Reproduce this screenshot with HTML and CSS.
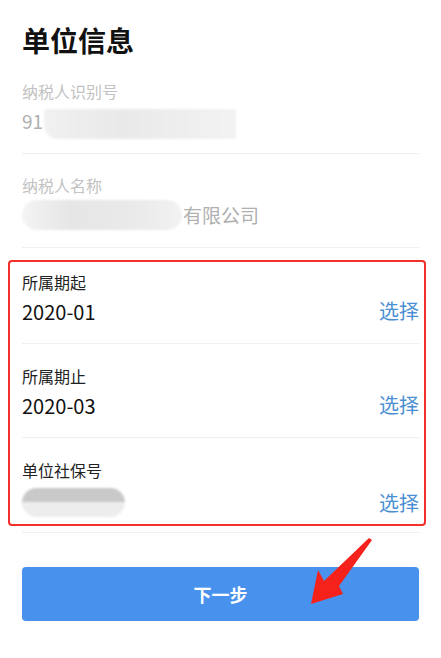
FILE: index.html
```html
<!DOCTYPE html>
<html lang="zh-CN">
<head>
    <meta charset="UTF-8">
    <meta name="viewport" content="width=device-width, initial-scale=1.0">
    <title>单位信息</title>
    <link rel="stylesheet" href="styles.css">
</head>
<body>
    <div class="page">
        <h1 class="title">单位信息</h1>

        <div class="field">
            <div class="field-label">纳税人识别号</div>
            <div class="field-value">91<span class="mask mask-id"></span></div>
        </div>

        <div class="field">
            <div class="field-label">纳税人名称</div>
            <div class="field-value"><span class="mask mask-name"></span>有限公司</div>
        </div>

        <div class="picker-box">
            <div class="picker-row picker-first">
                <div class="picker-label">所属期起</div>
                <div class="picker-line">
                    <span class="picker-value">2020-01</span>
                    <a href="#" class="picker-link">选择</a>
                </div>
            </div>
            <div class="picker-row">
                <div class="picker-label">所属期止</div>
                <div class="picker-line">
                    <span class="picker-value">2020-03</span>
                    <a href="#" class="picker-link">选择</a>
                </div>
            </div>
            <div class="picker-row picker-last">
                <div class="picker-label">单位社保号</div>
                <div class="picker-line">
                    <span class="mask mask-social"></span>
                    <a href="#" class="picker-link">选择</a>
                </div>
            </div>
        </div>
        <div class="box-divider"></div>

        <button type="button" class="next-btn">下一步</button>

        <!-- annotation arrow -->
        <svg class="arrow" width="80" height="80" viewBox="0 0 80 80">
            <polygon points="67,4 34,50 38,58 6,68 13,34 19,45 64,2" fill="#f5221b"/>
        </svg>
    </div>
</body>
</html>
```

FILE: styles.css
```css
body {
    margin: 0;
    background: #fff;
    font-family: "Noto Sans CJK SC", "Noto Sans", sans-serif;
}
.page {
    position: relative;
    width: 441px;
    height: 658px;
    overflow: hidden;
}
.title {
    margin: 0;
    padding: 20px 22px 0;
    height: 40px;
    line-height: 40px;
    font-size: 28px;
    font-weight: bold;
    color: #111;
}
.field {
    margin: 0 22px;
    padding: 21px 0 18px;
    border-bottom: 1px solid #f0f0f0;
}
.field-label {
    height: 20px;
    line-height: 20px;
    font-size: 16px;
    color: #c2c2c2;
}
.field-value {
    margin-top: 6px;
    height: 28px;
    line-height: 28px;
    font-size: 19px;
    color: #b0b0b0;
    display: flex;
    align-items: center;
}
.mask {
    display: inline-block;
    border-radius: 15px;
    filter: blur(1px);
}
.mask-id {
    width: 192px;
    height: 30px;
    margin-left: 1px;
    margin-top: 6px;
    background: linear-gradient(90deg, #f1f1f1, #e9e9e9 40%, #eeeeee 70%, #f3f3f3);
    border-radius: 4px 0 0 14px;
}
.mask-name {
    width: 160px;
    height: 30px;
    margin-right: 1px;
    background: linear-gradient(90deg, #f4f4f4, #e6e6e6 30%, #eaeaea 70%, #f2f2f2);
}
.mask-social {
    width: 103px;
    height: 29px;
    background: linear-gradient(180deg, #c9c9c9 50%, #ededed 50%);
}
.picker-box {
    margin: 12px 15px 0 8px;
    padding: 0 5px 0 12px;
    border: 2px solid #f3302a;
    border-radius: 4px;
}
.picker-row {
    padding: 22px 0 18px;
    border-bottom: 1px solid #f0f0f0;
}
.picker-first {
    padding-top: 10px;
}
.picker-last {
    padding-bottom: 7px;
    border-bottom: none;
}
.picker-label {
    height: 20px;
    line-height: 20px;
    font-size: 16px;
    color: #222;
}
.picker-line {
    margin-top: 5px;
    height: 28px;
    display: flex;
    justify-content: space-between;
    align-items: center;
}
.picker-last .picker-line {
    margin-top: 8px;
    height: 29px;
    align-items: flex-end;
}
.picker-value {
    font-size: 20px;
    color: #111;
}
.picker-link {
    font-size: 20px;
    line-height: 28px;
    color: #4a8fd3;
    text-decoration: none;
}
.box-divider {
    margin: 6px 22px 0;
    border-top: 1px solid #f0f0f0;
}
.next-btn {
    display: block;
    margin: 34px 22px 0;
    width: 397px;
    height: 54px;
    border: none;
    border-radius: 4px;
    background: #4892ee;
    box-shadow: 0 0 6px rgba(0, 0, 0, 0.04);
    color: #fff;
    font-family: inherit;
    font-size: 18px;
    font-weight: bold;
    cursor: pointer;
}
.arrow {
    position: absolute;
    left: 305px;
    top: 536px;
}
```
